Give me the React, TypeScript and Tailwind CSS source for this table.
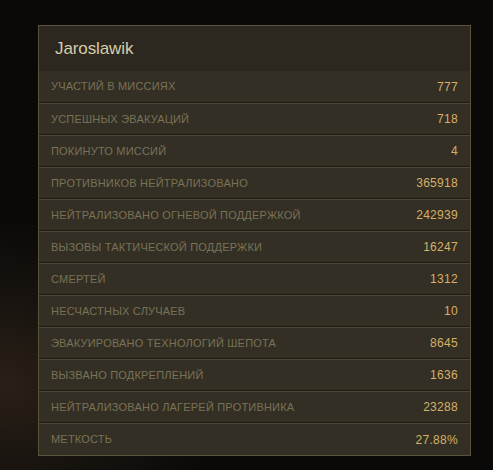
import React from "react";

const stats: [string, string][] = [
  ["Участий в миссиях", "777"],
  ["Успешных эвакуаций", "718"],
  ["Покинуто миссий", "4"],
  ["Противников нейтрализовано", "365918"],
  ["Нейтрализовано огневой поддержкой", "242939"],
  ["Вызовы тактической поддержки", "16247"],
  ["Смертей", "1312"],
  ["Несчастных случаев", "10"],
  ["Эвакуировано технологий шепота", "8645"],
  ["Вызвано подкреплений", "1636"],
  ["Нейтрализовано лагерей противника", "23288"],
  ["Меткость", "27.88%"],
];

const App: React.FC = () => {
  return (
    <div
      className="w-[493px] h-[470px] overflow-hidden pt-[25px] pl-[38px] bg-[radial-gradient(ellipse_60%_45%_at_0%_82%,#2a2017_0%,#16120e_45%,#0a0908_80%)]"
      style={{ fontFamily: '"Liberation Sans", Arial, sans-serif' }}
    >
      <div className="w-[433px] border border-[#5a533b] bg-[#332f25]">
        {/* Header */}
        <div className="h-[45px] bg-[#2c2820] flex items-center pl-[16px]">
          <span className="text-[17px] text-[#d4ccaa] tracking-[-0.1px]">Jaroslawik</span>
        </div>

        {/* Rows */}
        {stats.map(([label, value], i) => (
          <div
            key={label}
            className={
              "flex items-center justify-between h-[32px] pl-[12px] pr-[12px] " +
              (i === 0 ? "border-b border-[#1e1c16] h-[31px]" : i === stats.length - 1 ? "border-t border-[#4d4733] h-[31px]" : "border-t border-b border-t-[#4d4733] border-b-[#1e1c16]")
            }
          >
            <span className="text-[11px] uppercase text-[#7a7255] tracking-[0.2px]">{label}</span>
            <span className="text-[12px] text-[#d6b066] tracking-[0.3px]">{value}</span>
          </div>
        ))}
      </div>
    </div>
  );
};

export default App;
